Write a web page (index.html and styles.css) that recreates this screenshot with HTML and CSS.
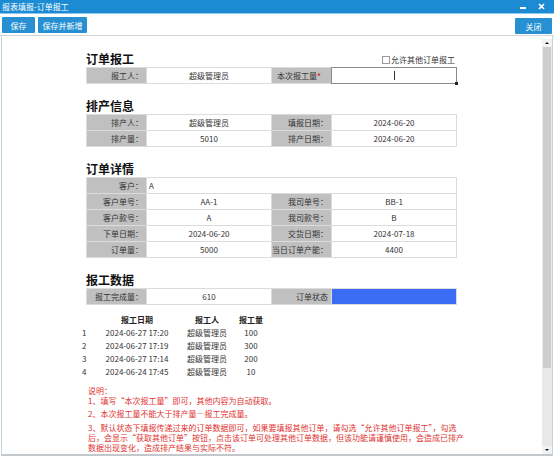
FILE: index.html
```html
<!DOCTYPE html>
<html lang="zh-CN">
<head>
<meta charset="utf-8">
<title>报表填报-订单报工</title>
<link rel="stylesheet" href="styles.css">
</head>
<body>
<div class="win">
  <header class="titlebar">
    <span class="title">报表填报-订单报工</span>
    <div class="wctl">
      <span class="min"></span>
      <svg class="x" width="7" height="7" viewBox="0 0 7 7"><path d="M1 1L6 6M6 1L1 6" stroke="#fff" stroke-width="1.7" fill="none"/></svg>
    </div>
  </header>
  <div class="toolbar">
    <button class="btn b-save">保存</button>
    <button class="btn b-new">保存并新增</button>
    <button class="btn b-close">关闭</button>
  </div>
  <div class="panel">
    <main class="content">
      <section class="sec">
        <div class="sec-head">
          <h2>订单报工</h2>
          <label class="chk"><span class="box"></span>允许其他订单报工</label>
        </div>
        <div class="grid">
          <div class="lbl">报工人：</div><div class="val">超级管理员</div>
          <div class="lbl lbl-req">本次报工量<span class="req">*</span></div>
          <div class="val input"><span class="caret"></span><span class="grip"></span></div>
        </div>
      </section>

      <section class="sec">
        <div class="sec-head"><h2>排产信息</h2></div>
        <div class="grid">
          <div class="lbl">排产人：</div><div class="val">超级管理员</div>
          <div class="lbl">填报日期：</div><div class="val">2024-06-20</div>
          <div class="lbl">排产量：</div><div class="val">5010</div>
          <div class="lbl">排产日期：</div><div class="val">2024-06-20</div>
        </div>
      </section>

      <section class="sec">
        <div class="sec-head"><h2>订单详情</h2></div>
        <div class="grid">
          <div class="lbl">客户：</div><div class="val wide">A</div>
          <div class="lbl">客户单号：</div><div class="val">AA-1</div>
          <div class="lbl">我司单号：</div><div class="val">BB-1</div>
          <div class="lbl">客户款号：</div><div class="val">A</div>
          <div class="lbl">我司款号：</div><div class="val">B</div>
          <div class="lbl">下单日期：</div><div class="val">2024-06-20</div>
          <div class="lbl">交货日期：</div><div class="val">2024-07-18</div>
          <div class="lbl">订单量：</div><div class="val">5000</div>
          <div class="lbl">当日订单产能：</div><div class="val">4400</div>
        </div>
      </section>

      <section class="sec">
        <div class="sec-head"><h2>报工数据</h2></div>
        <div class="grid">
          <div class="lbl">报工完成量：</div><div class="val">610</div>
          <div class="lbl">订单状态</div><div class="val status"></div>
        </div>
      </section>

      <div class="rec">
        <div class="th"></div><div class="th">报工日期</div><div class="th">报工人</div><div class="th">报工量</div>
        <div class="idx">1</div><div class="td">2024-06-27 17:20</div><div class="td">超级管理员</div><div class="td">100</div>
        <div class="idx">2</div><div class="td">2024-06-27 17:19</div><div class="td">超级管理员</div><div class="td">300</div>
        <div class="idx">3</div><div class="td">2024-06-27 17:14</div><div class="td">超级管理员</div><div class="td">200</div>
        <div class="idx">4</div><div class="td">2024-06-24 17:45</div><div class="td">超级管理员</div><div class="td">10</div>
      </div>

      <div class="notes">
        <p class="nt">说明：</p>
        <p>1、填写“本次报工量”即可，其他内容为自动获取。</p>
        <p class="gap">2、本次报工量不能大于排产量—报工完成量。</p>
        <p class="gap gap2">3、默认状态下填报传递过来的订单数据即可，如果要填报其他订单，请勾选“允许其他订单报工”，勾选<br>后，会显示“获取其他订单”按钮，点击该订单可处理其他订单数据，但该功能请谨慎使用，会造成已排产<br>数据出现变化，造成排产结果与实际不符。</p>
      </div>
    </main>
    <div class="sb">
      <div class="arr"><span class="tri up"></span></div>
      <div class="thumb"></div>
      <div class="track"></div>
      <div class="arr"><span class="tri down"></span></div>
    </div>
  </div>
</div>
</body>
</html>
```
FILE: styles.css
```css
* { box-sizing: border-box; margin: 0; padding: 0; }
html, body {
  width: 554px; height: 463px; overflow: hidden; background: #fff;
  font-family: "Noto Sans CJK SC", "Noto Sans", sans-serif;
  font-size: 8px; color: #333;
}
.win { width: 554px; height: 463px; display: flex; flex-direction: column; }

.titlebar {
  height: 14px; background: #1d8bd3; color: #fff;
  display: flex; align-items: center; justify-content: space-between;
  padding: 0 9px 0 2px; border-bottom: 1px solid #8ccaee;
}
.title { font-size: 8px; line-height: 13px; }
.wctl { display: flex; align-items: center; gap: 12px; }
.min { width: 6px; height: 2px; background: #fff; margin-top: 3px; }
.x { display: block; }

.toolbar {
  height: 22px; display: flex; align-items: flex-start;
  padding: 3px 2px 0 2px; gap: 3px; border-bottom: 1px solid #d4d4d4;
}
.btn {
  height: 16px; background: #2690d2; color: #fff; border: 0;
  font-family: inherit; font-size: 8px; border-radius: 1px;
}
.b-save { width: 33px; }
.b-new { width: 49px; }
.b-close { width: 37px; margin-left: auto; margin-top: 1px; }

.panel {
  height: 420px; display: flex;
  margin: 0 1px 0 1px;
  border-left: 1px solid #c5d5e0; border-right: 1px solid #c5d5e0;
  border-bottom: 2px solid #c2c8cc;
}
.content { flex: 1; padding-top: 15px; }

.sec { margin-left: 84px; width: 371px; }
.sec + .sec { margin-top: 14px; }
.sec-head { height: 16px; display: flex; justify-content: space-between; align-items: center; }
h2 { font-size: 12px; font-weight: bold; color: #111; line-height: 16px; }
.chk { display: flex; align-items: center; gap: 1px; margin-right: 2px; margin-top: 1px; color: #333; }
.box { width: 8px; height: 8px; border: 1px solid #9a9a9a; background: #fff; }

.grid {
  display: grid; grid-template-columns: 59px 124px 59px 124px;
  grid-auto-rows: 15px; gap: 1px; padding: 1px; background: #dcdcdc;
}
.lbl { background: #c0c0c0; text-align: right; padding-right: 3px; line-height: 15px; white-space: nowrap; }
.lbl-req { padding-right: 10px; }
.req { color: #e0322f; font-weight: bold; }
.val { background: #fff; text-align: center; line-height: 15px; white-space: nowrap; }
.val.wide { grid-column: span 3; text-align: left; padding-left: 2px; }
.val.input { position: relative; box-shadow: 0 0 0 1px #8a8a8a; }
.caret { position: absolute; left: 62px; top: 3px; width: 1px; height: 9px; background: #333; }
.grip { position: absolute; right: -2px; bottom: -2px; width: 3px; height: 3px; background: #222; }
.val.status { background: #3b6cf6; }

.rec {
  margin-left: 77px; margin-top: 8px;
  display: grid; grid-template-columns: 20px 76px 64px 24px;
  line-height: 13px; white-space: nowrap;
}
.th { font-weight: bold; text-align: center; color: #222; }
.td { text-align: center; }
.idx { padding-left: 3px; }

.notes { margin-left: 86px; margin-top: 8px; color: #e0322f; line-height: 10px; white-space: nowrap; }
.notes .gap { margin-top: 3px; }
.notes .gap2 { margin-top: 4px; }

.sb {
  width: 10px; margin-top: 3px; margin-bottom: 0;
  background: #e9e9e9; display: flex; flex-direction: column;
}
.arr { height: 8px; background: #f2f2f2; display: flex; align-items: center; justify-content: center; }
.tri { width: 0; height: 0; border-left: 2px solid transparent; border-right: 2px solid transparent; }
.tri.up { border-bottom: 2px solid #111; }
.tri.down { border-top: 2px solid #111; }
.thumb { height: 321px; background: #cdcdcd; margin: 0 1px; }
.track { flex: 1; }
```
